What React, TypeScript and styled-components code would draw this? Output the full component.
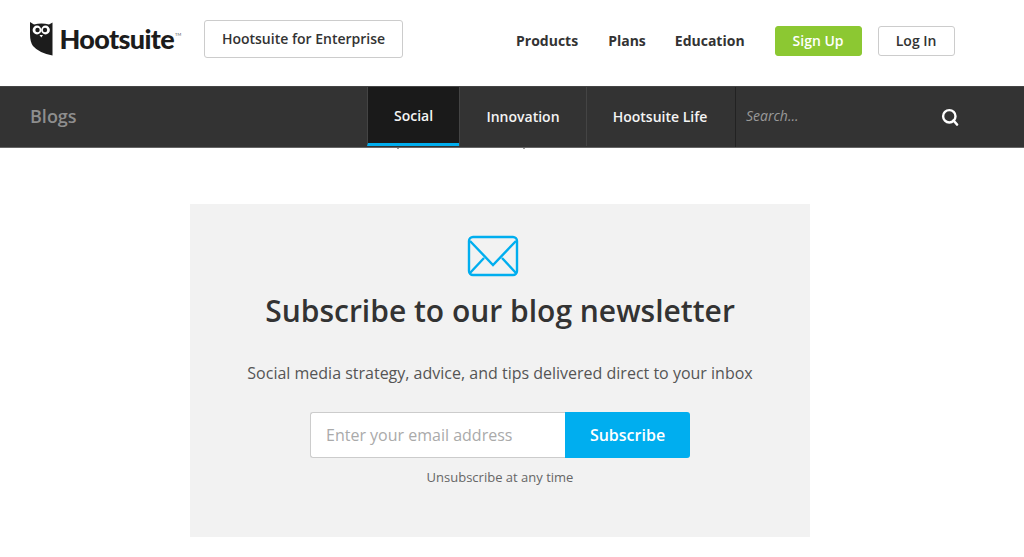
import React from "react";
import styled, { createGlobalStyle } from "styled-components";

const GlobalStyle = createGlobalStyle`
  html, body {
    margin: 0;
    padding: 0;
    background: #fff;
    font-family: "Open Sans", "Liberation Sans", sans-serif;
    overflow: hidden;
  }
  * {
    box-sizing: border-box;
  }
`;

const Page = styled.div`
  width: 1024px;
  height: 557px;
  overflow: hidden;
`;

const Header = styled.header`
  height: 86px;
  display: flex;
  align-items: flex-start;
  padding-left: 30px;
`;

const Logo = styled.a`
  display: flex;
  align-items: flex-start;
  width: 174px;
  margin-top: 22px;
`;

const LogoText = styled.span`
  font-family: "Lato", sans-serif;
  font-weight: 900;
  font-size: 27px;
  line-height: 34px;
  letter-spacing: -0.65px;
  color: #1c1c1c;
  margin-left: 6.5px;
`;

const Tm = styled.sup`
  font-size: 4px;
  line-height: 5px;
  font-weight: 400;
  letter-spacing: 0;
  vertical-align: 13px;
  margin-left: 1px;
  color: #555;
`;

const EnterpriseButton = styled.a`
  margin-top: 20px;
  width: 199px;
  height: 38px;
  display: flex;
  align-items: center;
  justify-content: center;
  padding-bottom: 1px;
  background: #fff;
  border: 1px solid #ccc;
  border-radius: 3px;
  font-size: 14px;
  font-weight: 600;
  color: #333;
`;

const MainNav = styled.nav`
  display: flex;
  align-items: center;
  height: 30px;
  margin-top: 26px;
  margin-left: 113px;
`;

const MainLink = styled.a<{ $gap: number }>`
  font-size: 14px;
  font-weight: 700;
  margin-bottom: 1px;
  color: #333;
  margin-right: ${(p) => p.$gap}px;
`;

const ActionButton = styled.a<{ $primary?: boolean; $width: number }>`
  width: ${(p) => p.$width}px;
  height: 30px;
  display: flex;
  align-items: center;
  justify-content: center;
  padding-bottom: 1px;
  border-radius: 3px;
  border: 1px solid ${(p) => (p.$primary ? "#8cc832" : "#ccc")};
  background: ${(p) => (p.$primary ? "#8cc832" : "#fff")};
  color: ${(p) => (p.$primary ? "#fff" : "#333")};
  font-size: 14px;
  font-weight: 600;
  margin-right: 16px;
`;

const BlogBar = styled.div`
  height: 62px;
  display: flex;
  background: #333;
  border-top: 1px solid #444;
  border-bottom: 1px solid #666;
`;

const BlogsTitle = styled.div`
  width: 367px;
  padding-left: 30px;
  font-size: 18px;
  font-weight: 600;
  line-height: 58px;
  color: #8e8e8e;
`;

const Tabs = styled.div`
  display: flex;
`;

const Tab = styled.a<{ $active?: boolean; $width: number }>`
  width: ${(p) => p.$width}px;
  height: 59px;
  display: flex;
  align-items: center;
  justify-content: center;
  padding-right: ${(p) => (p.$width > 140 ? "2px" : "0")};
  background: ${(p) => (p.$active ? "#1a1a1a" : "transparent")};
  border-left: 1px solid #444;
  border-bottom: ${(p) => (p.$active ? "3px solid #00aeef" : "0")};
  color: #f4f4f4;
  font-size: 14px;
  font-weight: 600;
`;

const SearchBox = styled.div`
  flex: 1;
  display: flex;
  align-items: center;
  padding: 0 65px 0 10px;
  border-left: 1px solid #222;
`;

const SearchPlaceholder = styled.span`
  flex: 1;
  font-size: 14px;
  font-style: italic;
  color: #9a9a9a;
  margin-bottom: 4px;
`;

const SearchIcon = styled.svg`
  width: 18px;
  height: 18px;
`;

const Main = styled.main`
  position: relative;
  display: flex;
  justify-content: center;
  padding: 56px 24px 0 0;
`;

const Speck = styled.i<{ $left: number }>`
  position: absolute;
  top: 0;
  left: ${(p) => p.$left}px;
  width: 2px;
  height: 1px;
  background: #999;
`;

const Card = styled.section`
  width: 620px;
  height: 333px;
  padding-top: 31px;
  background: #f2f2f2;
  display: flex;
  flex-direction: column;
  align-items: center;
`;

const MailIcon = styled.svg`
  width: 52px;
  height: 42px;
  margin-left: -15px;
`;

const Title = styled.h2`
  margin: 14px 0 0;
  font-size: 30px;
  line-height: 40px;
  font-weight: 600;
  color: #333;
`;

const Lead = styled.p`
  margin: 30px 0 0;
  font-size: 16px;
  line-height: 24px;
  color: #555;
`;

const Form = styled.form`
  display: flex;
  width: 380px;
  height: 46px;
  margin-top: 27px;
`;

const EmailInput = styled.input`
  width: 255px;
  height: 46px;
  padding: 0 15px;
  border: 1px solid #ccc;
  border-right: 0;
  border-radius: 3px 0 0 3px;
  background: #fff;
  font-family: inherit;
  font-size: 16px;
  outline: none;
  &::placeholder {
    color: #aaa;
    opacity: 1;
  }
`;

const SubscribeButton = styled.button`
  width: 125px;
  height: 46px;
  border: 0;
  border-radius: 0 3px 3px 0;
  background: #00aeef;
  color: #fff;
  font-family: inherit;
  font-size: 16px;
  font-weight: 600;
`;

const Note = styled.p`
  margin: 9px 0 0;
  font-size: 13px;
  line-height: 20px;
  color: #666;
`;

const OwlLogo = () => (
  <svg width="23" height="34" viewBox="0 0 23 34">
    <path
      fill="#1c1c1c"
      d="M0 0 L4 2.5 Q11.5 0.5 19 2.5 L22.5 0.5 L22.5 33.5 Q9 31 3 24 Q0 20 0 12 Z"
    />
    <circle cx="7" cy="8" r="4.4" fill="#fff" />
    <circle cx="15.5" cy="8" r="4.4" fill="#fff" />
    <circle cx="7.5" cy="8" r="2.2" fill="#1c1c1c" />
    <circle cx="15" cy="8" r="2.2" fill="#1c1c1c" />
    <path fill="#fff" d="M9.5 13 L11.3 15.5 L13 13 Z" />
  </svg>
);

const App = () => {
  return (
    <Page>
      <GlobalStyle />
      <Header>
        <Logo>
          <OwlLogo />
          <LogoText>
            Hootsuite<Tm>TM</Tm>
          </LogoText>
        </Logo>
        <EnterpriseButton>Hootsuite for Enterprise</EnterpriseButton>
        <MainNav>
          <MainLink $gap={30}>Products</MainLink>
          <MainLink $gap={29}>Plans</MainLink>
          <MainLink $gap={30}>Education</MainLink>
          <ActionButton $primary $width={87}>
            Sign Up
          </ActionButton>
          <ActionButton $width={77}>Log In</ActionButton>
        </MainNav>
      </Header>
      <BlogBar>
        <BlogsTitle>Blogs</BlogsTitle>
        <Tabs>
          <Tab $active $width={92}>
            Social
          </Tab>
          <Tab $width={127}>Innovation</Tab>
          <Tab $width={149}>Hootsuite Life</Tab>
        </Tabs>
        <SearchBox>
          <SearchPlaceholder>Search...</SearchPlaceholder>
          <SearchIcon viewBox="0 0 18 18">
            <circle cx="8.3" cy="8.3" r="6.2" fill="none" stroke="#fff" strokeWidth="2.4" />
            <path d="M12.5 12.5 L16 16.5" stroke="#fff" strokeWidth="2.6" strokeLinecap="round" />
          </SearchIcon>
        </SearchBox>
      </BlogBar>
      <Main>
        <Speck $left={397} />
        <Speck $left={523} />
        <Card>
          <MailIcon viewBox="0 0 52 42" fill="none" stroke="#00aeef" strokeWidth="2.4">
            <rect x="2" y="2" width="48" height="38" rx="4" />
            <path d="M3 6 L26 30 L49 6" />
            <path d="M3 38 L17 23" />
            <path d="M49 38 L35 23" />
          </MailIcon>
          <Title>Subscribe to our blog newsletter</Title>
          <Lead>Social media strategy, advice, and tips delivered direct to your inbox</Lead>
          <Form>
            <EmailInput placeholder="Enter your email address" />
            <SubscribeButton type="button">Subscribe</SubscribeButton>
          </Form>
          <Note>Unsubscribe at any time</Note>
        </Card>
      </Main>
    </Page>
  );
};

export default App;
